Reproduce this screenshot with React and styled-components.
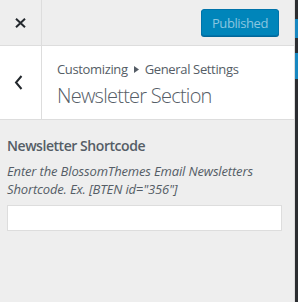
import React from "react";
import styled, { createGlobalStyle } from "styled-components";

const Global = createGlobalStyle`
  html, body { margin: 0; padding: 0; }
  body { width: 298px; height: 302px; overflow: hidden; font-family: "Open Sans", "Noto Sans", sans-serif; }
`;

const Page = styled.div`
  display: flex;
  width: 298px;
  height: 302px;
`;

const Panel = styled.div`
  width: 295px;
  flex: none;
  background: #eeeeee;
  display: flex;
  flex-direction: column;
  border-right: 1px solid #dddddd;
  box-sizing: border-box;
`;

const Preview = styled.div`
  flex: 1;
  background: #2b2d31;
  display: flex;
  flex-direction: column;
  padding-top: 19px;
  gap: 15px;
`;

const PreviewBlock = styled.div`
  height: ${(p) => p.h}px;
  background: #1787c0;
`;

const Header = styled.div`
  height: 45px;
  display: flex;
  align-items: center;
  border-bottom: 1px solid #dddddd;
  background: #eeeeee;
`;

const CloseBtn = styled.div`
  width: 42px;
  height: 45px;
  border-right: 1px solid #dddddd;
  display: flex;
  align-items: center;
  justify-content: center;
  padding-top: 1px;
  box-sizing: border-box;
`;

const Spacer = styled.div` flex: 1; `;

const PublishBtn = styled.div`
  width: 78px;
  height: 27px;
  box-sizing: border-box;
  margin-right: 15px;
  background: #0085ba;
  border: 1px solid #0073aa;
  border-radius: 3px;
  color: #8ac6e0;
  font-size: 13px;
  letter-spacing: -0.4px;
  display: flex;
  align-items: center;
  justify-content: center;
  box-shadow: 0 1px 0 #006799;
`;

const SectionHead = styled.div`
  height: 73px;
  display: flex;
  background: #ffffff;
  border-bottom: 1px solid #dddddd;
`;

const BackBtn = styled.div`
  width: 42px;
  border-right: 1px solid #dddddd;
  display: flex;
  align-items: center;
  justify-content: center;
  padding-right: 5px;
  box-sizing: border-box;
`;

const TitleBox = styled.div`
  padding: 14px 0 0 15px;
  color: #555d66;
`;

const Crumb = styled.div`
  font-size: 13px;
  line-height: 18px;
  letter-spacing: -0.35px;
  display: flex;
  align-items: center;
  gap: 6px;
`;

const Title = styled.div`
  font-size: 20px;
  font-weight: 300;
  line-height: 28px;
  letter-spacing: -0.75px;
  margin-top: 4px;
`;

const Body = styled.div`
  padding: 16px 12px 0 7px;
`;

const Label = styled.div`
  font-size: 14px;
  font-weight: 600;
  color: #555d66;
  line-height: 20px;
  letter-spacing: -0.45px;
`;

const Desc = styled.div`
  font-size: 13px;
  font-style: italic;
  color: #555d66;
  line-height: 18px;
  letter-spacing: -0.15px;
  margin-top: 6px;
`;

const Input = styled.input`
  display: block;
  width: 275px;
  height: 26px;
  box-sizing: border-box;
  margin-top: 7px;
  border: 1px solid #dddddd;
  background: #fff;
  outline: none;
`;

export default function App() {
  return (
    <>
      <Global />
      <Page>
        <Panel>
          <Header>
            <CloseBtn>
              <svg width="11" height="10" viewBox="0 0 11 10">
                <path d="M1 0.8 L10 9.2 M10 0.8 L1 9.2" stroke="#23282d" strokeWidth="2" />
              </svg>
            </CloseBtn>
            <Spacer />
            <PublishBtn>Published</PublishBtn>
          </Header>
          <SectionHead>
            <BackBtn>
              <svg width="9" height="15" viewBox="0 0 9 15">
                <path d="M7.5 1 L2 7.5 L7.5 14" stroke="#23282d" strokeWidth="2" fill="none" />
              </svg>
            </BackBtn>
            <TitleBox>
              <Crumb>
                <span>Customizing</span>
                <svg width="5" height="7" viewBox="0 0 5 7">
                  <path d="M0 0 L5 3.5 L0 7 Z" fill="#555d66" />
                </svg>
                <span>General Settings</span>
              </Crumb>
              <Title>Newsletter Section</Title>
            </TitleBox>
          </SectionHead>
          <Body>
            <Label>Newsletter Shortcode</Label>
            <Desc>
              Enter the BlossomThemes Email Newsletters
              <br />
              Shortcode. Ex. [BTEN id="356"]
            </Desc>
            <Input type="text" />
          </Body>
        </Panel>
        <Preview>
          <PreviewBlock h={19} />
          <PreviewBlock h={26} />
        </Preview>
      </Page>
    </>
  );
}
